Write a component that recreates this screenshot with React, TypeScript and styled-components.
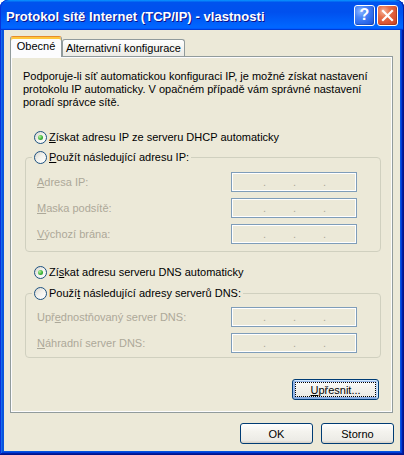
import React from "react";
import styled, { createGlobalStyle, css } from "styled-components";

const Global = createGlobalStyle`
  html, body { margin: 0; padding: 0; background: #ffffff; }
  body { font-family: "Liberation Sans", Arial, sans-serif; font-size: 11px; color: #000; }
  * { box-sizing: border-box; }
`;

const uiFont = `"Liberation Sans", Arial, sans-serif`;

const Window = styled.div`
  width: 404px;
  height: 455px;
  display: flex;
  flex-direction: column;
  border-radius: 8px 8px 0 0;
  overflow: hidden;
  background: #0855dd;
  box-shadow:
    inset -1px -1px #00138c, inset 1px 1px #0831d9,
    inset -2px -2px #001ea0, inset 2px 2px #166aee,
    inset -3px -3px #003bda, inset 3px 3px #0855dd;
`;

const TitleBar = styled.div`
  flex: none;
  height: 30px;
  display: flex;
  align-items: center;
  padding: 0 6px 0 6px;
  border-radius: 8px 8px 0 0;
  background: linear-gradient(
    180deg,
    #0997ff,
    #0053ee 8%,
    #0050ee 40%,
    #0066ff 88%,
    #0066ff 93%,
    #005bff 95%,
    #003dd7 96%,
    #003dd7
  );
  box-shadow: inset 1px 0 #0831d9, inset -1px 0 #001ea0;
`;

const Title = styled.span`
  flex: 1;
  padding-top: 2px;
  color: #fff;
  font: bold 13px ${uiFont};
  text-shadow: 1px 1px #0f1089;
  white-space: nowrap;
  letter-spacing: 0.05px;
`;

const CaptionButtons = styled.div`
  display: flex;
  gap: 2px;
`;

const CaptionButton = styled.div<{ $variant: "help" | "close" }>`
  width: 21px;
  height: 21px;
  border: 1px solid #fff;
  border-radius: 3px;
  display: flex;
  align-items: center;
  justify-content: center;
  color: #fff;
  font: bold 16px ${uiFont};
  box-shadow: inset -1px -1px rgba(0, 0, 0, 0.18);
  background: ${(p) =>
    p.$variant === "close"
      ? "radial-gradient(circle at 30% 28%, #f6b297 0%, #e7704a 32%, #d9502f 70%, #c3401f 100%)"
      : "radial-gradient(circle at 30% 28%, #8fb6ff 0%, #4a86f8 32%, #2a67ea 70%, #1c4fd2 100%)"};
`;

const Body = styled.div`
  flex: 1;
  margin: 0 4px 4px;
  background: #ece9d8;
  display: flex;
  flex-direction: column;
  padding: 6px 6px 7px 6px;
`;

const TabStrip = styled.div`
  display: flex;
  align-items: flex-end;
  height: 21px;
  margin-bottom: -1px;
  position: relative;
  z-index: 1;
`;

const Tab = styled.div<{ $active?: boolean }>`
  font: 11px ${uiFont};
  color: #000;
  white-space: nowrap;
  display: flex;
  align-items: center;
  justify-content: center;
  border: 1px solid #919b9c;
  border-bottom: none;
  border-radius: 3px 3px 0 0;
  ${(p) =>
    p.$active
      ? css`
          width: 52px;
          height: 21px;
          padding-bottom: 3px;
          background: #fcfcfe;
          border-top-color: #e68b2c;
          box-shadow: inset 0 2px #ffc73c;
        `
      : css`
          height: 17px;
          margin-bottom: 1px;
          padding: 0 3px;
          background: linear-gradient(180deg, #ffffff 0%, #f3f3ef 60%, #ecebe5 100%);
        `}
`;

const Panel = styled.div`
  flex: 1;
  margin-right: 1px;
  border: 1px solid #919b9c;
  box-shadow: inset 1px 1px #fcfcfe, inset -1px -1px #fcfcfe;
  background: #ece9d8;
  padding: 13px 11px 12px 12px;
  display: flex;
  flex-direction: column;
`;

const Intro = styled.p`
  margin: 0;
  line-height: 13px;
  white-space: nowrap;
`;

const RadioOption = styled.label<{ $top?: number; $indent?: number }>`
  display: flex;
  align-items: center;
  gap: 2px;
  height: 14px;
  white-space: nowrap;
  color: #000;
  margin-top: ${(p) => p.$top ?? 0}px;
  margin-left: ${(p) => p.$indent ?? 0}px;
`;

const RadioMark = styled.span<{ $checked?: boolean }>`
  flex: none;
  width: 13px;
  height: 13px;
  border-radius: 50%;
  border: 1px solid #1c5180;
  background: linear-gradient(135deg, #d6d4cb 0%, #f2f1ec 45%, #ffffff 100%);
  display: flex;
  align-items: center;
  justify-content: center;
  &::after {
    content: "";
    width: 5px;
    height: 5px;
    border-radius: 50%;
    background: radial-gradient(circle at 35% 35%, #b6f09a 0%, #3cb43c 55%, #1e8a1e 100%);
    display: ${(p) => (p.$checked ? "block" : "none")};
  }
`;

const Key = styled.span`
  text-decoration: underline;
`;

const Group = styled.fieldset<{ $top: number; $padTop: number; $padBottom: number }>`
  margin: ${(p) => p.$top}px 0 0 2px;
  padding: ${(p) => p.$padTop}px 23px ${(p) => p.$padBottom}px 11px;
  border: 1px solid #d0d0bf;
  border-radius: 4px;
  min-width: 0;
  display: flex;
  flex-direction: column;
  gap: 6px;
`;

const GroupLegend = styled.legend`
  padding: 0 2px;
  margin-left: -5px;
`;

const FieldRow = styled.div`
  display: flex;
  align-items: center;
  justify-content: space-between;
  height: 20px;
`;

const FieldLabel = styled.span`
  color: #aca899;
  white-space: nowrap;
`;

const IpBox = styled.div`
  width: 126px;
  height: 20px;
  border: 1px solid #7f9db9;
  box-shadow: inset 0 0 0 1px #ffffff;
  background: #ece9d8;
  display: flex;
  align-items: center;
  color: #aca899;
  font: 11px ${uiFont};
`;

const Octet = styled.span<{ $w: number }>`
  width: ${(p) => p.$w}px;
  flex: none;
`;

const Dot = styled.span`
  width: 3px;
  flex: none;
  line-height: 1;
`;

const Button = styled.button<{ $w: number; $focused?: boolean }>`
  width: ${(p) => p.$w}px;
  height: 21px;
  padding: 0;
  font: 11px ${uiFont};
  color: #000;
  border: 1px solid #003c74;
  border-radius: 3px;
  background: linear-gradient(180deg, #ffffff 0%, #f4f3ee 40%, #ecebe6 86%, #d6d0c5 100%);
  ${(p) =>
    p.$focused &&
    css`
      box-shadow: inset -1px 1px #cee7ff, inset 1px 2px #98b8ea, inset -2px 2px #bcd4f6,
        inset 1px -1px #89ade4, inset 2px -2px #89ade4;
      outline: 1px dotted #000;
      outline-offset: -4px;
    `}
`;

const AdvancedButton = styled(Button)`
  align-self: flex-end;
  margin: 21px 2px 0 0;
`;

const ButtonRow = styled.div`
  display: flex;
  justify-content: flex-end;
  gap: 8px;
  margin-top: 10px;
`;

function IpAddress() {
  return (
    <IpBox>
      <Octet $w={31} />
      <Dot>.</Dot>
      <Octet $w={27} />
      <Dot>.</Dot>
      <Octet $w={27} />
      <Dot>.</Dot>
    </IpBox>
  );
}

function Field({ label }: { label: React.ReactNode }) {
  return (
    <FieldRow>
      <FieldLabel>{label}</FieldLabel>
      <IpAddress />
    </FieldRow>
  );
}

export default function App() {
  return (
    <>
      <Global />
      <Window>
        <TitleBar>
          <Title>Protokol sítě Internet (TCP/IP) - vlastnosti</Title>
          <CaptionButtons>
            <CaptionButton $variant="help">?</CaptionButton>
            <CaptionButton $variant="close">
              <svg width="13" height="13" viewBox="0 0 13 13">
                <path d="M2 2 L11 11 M11 2 L2 11" stroke="#fff" strokeWidth="2.2" strokeLinecap="square" />
              </svg>
            </CaptionButton>
          </CaptionButtons>
        </TitleBar>
        <Body>
          <TabStrip>
            <Tab $active>Obecné</Tab>
            <Tab>Alternativní konfigurace</Tab>
          </TabStrip>
          <Panel>
            <Intro>
              Podporuje-li síť automatickou konfiguraci IP, je možné získat nastavení
              <br />
              protokolu IP automaticky. V opačném případě vám správné nastavení
              <br />
              poradí správce sítě.
            </Intro>

            <RadioOption $top={21} $indent={11}>
              <RadioMark $checked />
              <span>
                <Key>Z</Key>ískat adresu IP ze serveru DHCP automaticky
              </span>
            </RadioOption>

            <Group $top={6} $padTop={8} $padBottom={7}>
              <GroupLegend>
                <RadioOption>
                  <RadioMark />
                  <span>
                    <Key>P</Key>oužít následující adresu IP:
                  </span>
                </RadioOption>
              </GroupLegend>
              <Field label={<><Key>A</Key>dresa IP:</>} />
              <Field label={<><Key>M</Key>aska podsítě:</>} />
              <Field label={<><Key>V</Key>ýchozí brána:</>} />
            </Group>

            <RadioOption $top={13} $indent={11}>
              <RadioMark $checked />
              <span>
                Zí<Key>s</Key>kat adresu serveru DNS automaticky
              </span>
            </RadioOption>

            <Group $top={7} $padTop={7} $padBottom={4}>
              <GroupLegend>
                <RadioOption>
                  <RadioMark />
                  <span>
                    Použí<Key>t</Key> následující adresy serverů DNS:
                  </span>
                </RadioOption>
              </GroupLegend>
              <Field label={<>Upř<Key>e</Key>dnostňovaný server DNS:</>} />
              <Field label={<><Key>N</Key>áhradní server DNS:</>} />
            </Group>

            <AdvancedButton $w={87} $focused>
              <Key>U</Key>přesnit...
            </AdvancedButton>
          </Panel>
          <ButtonRow>
            <Button $w={73}>OK</Button>
            <Button $w={73}>Storno</Button>
          </ButtonRow>
        </Body>
      </Window>
    </>
  );
}
